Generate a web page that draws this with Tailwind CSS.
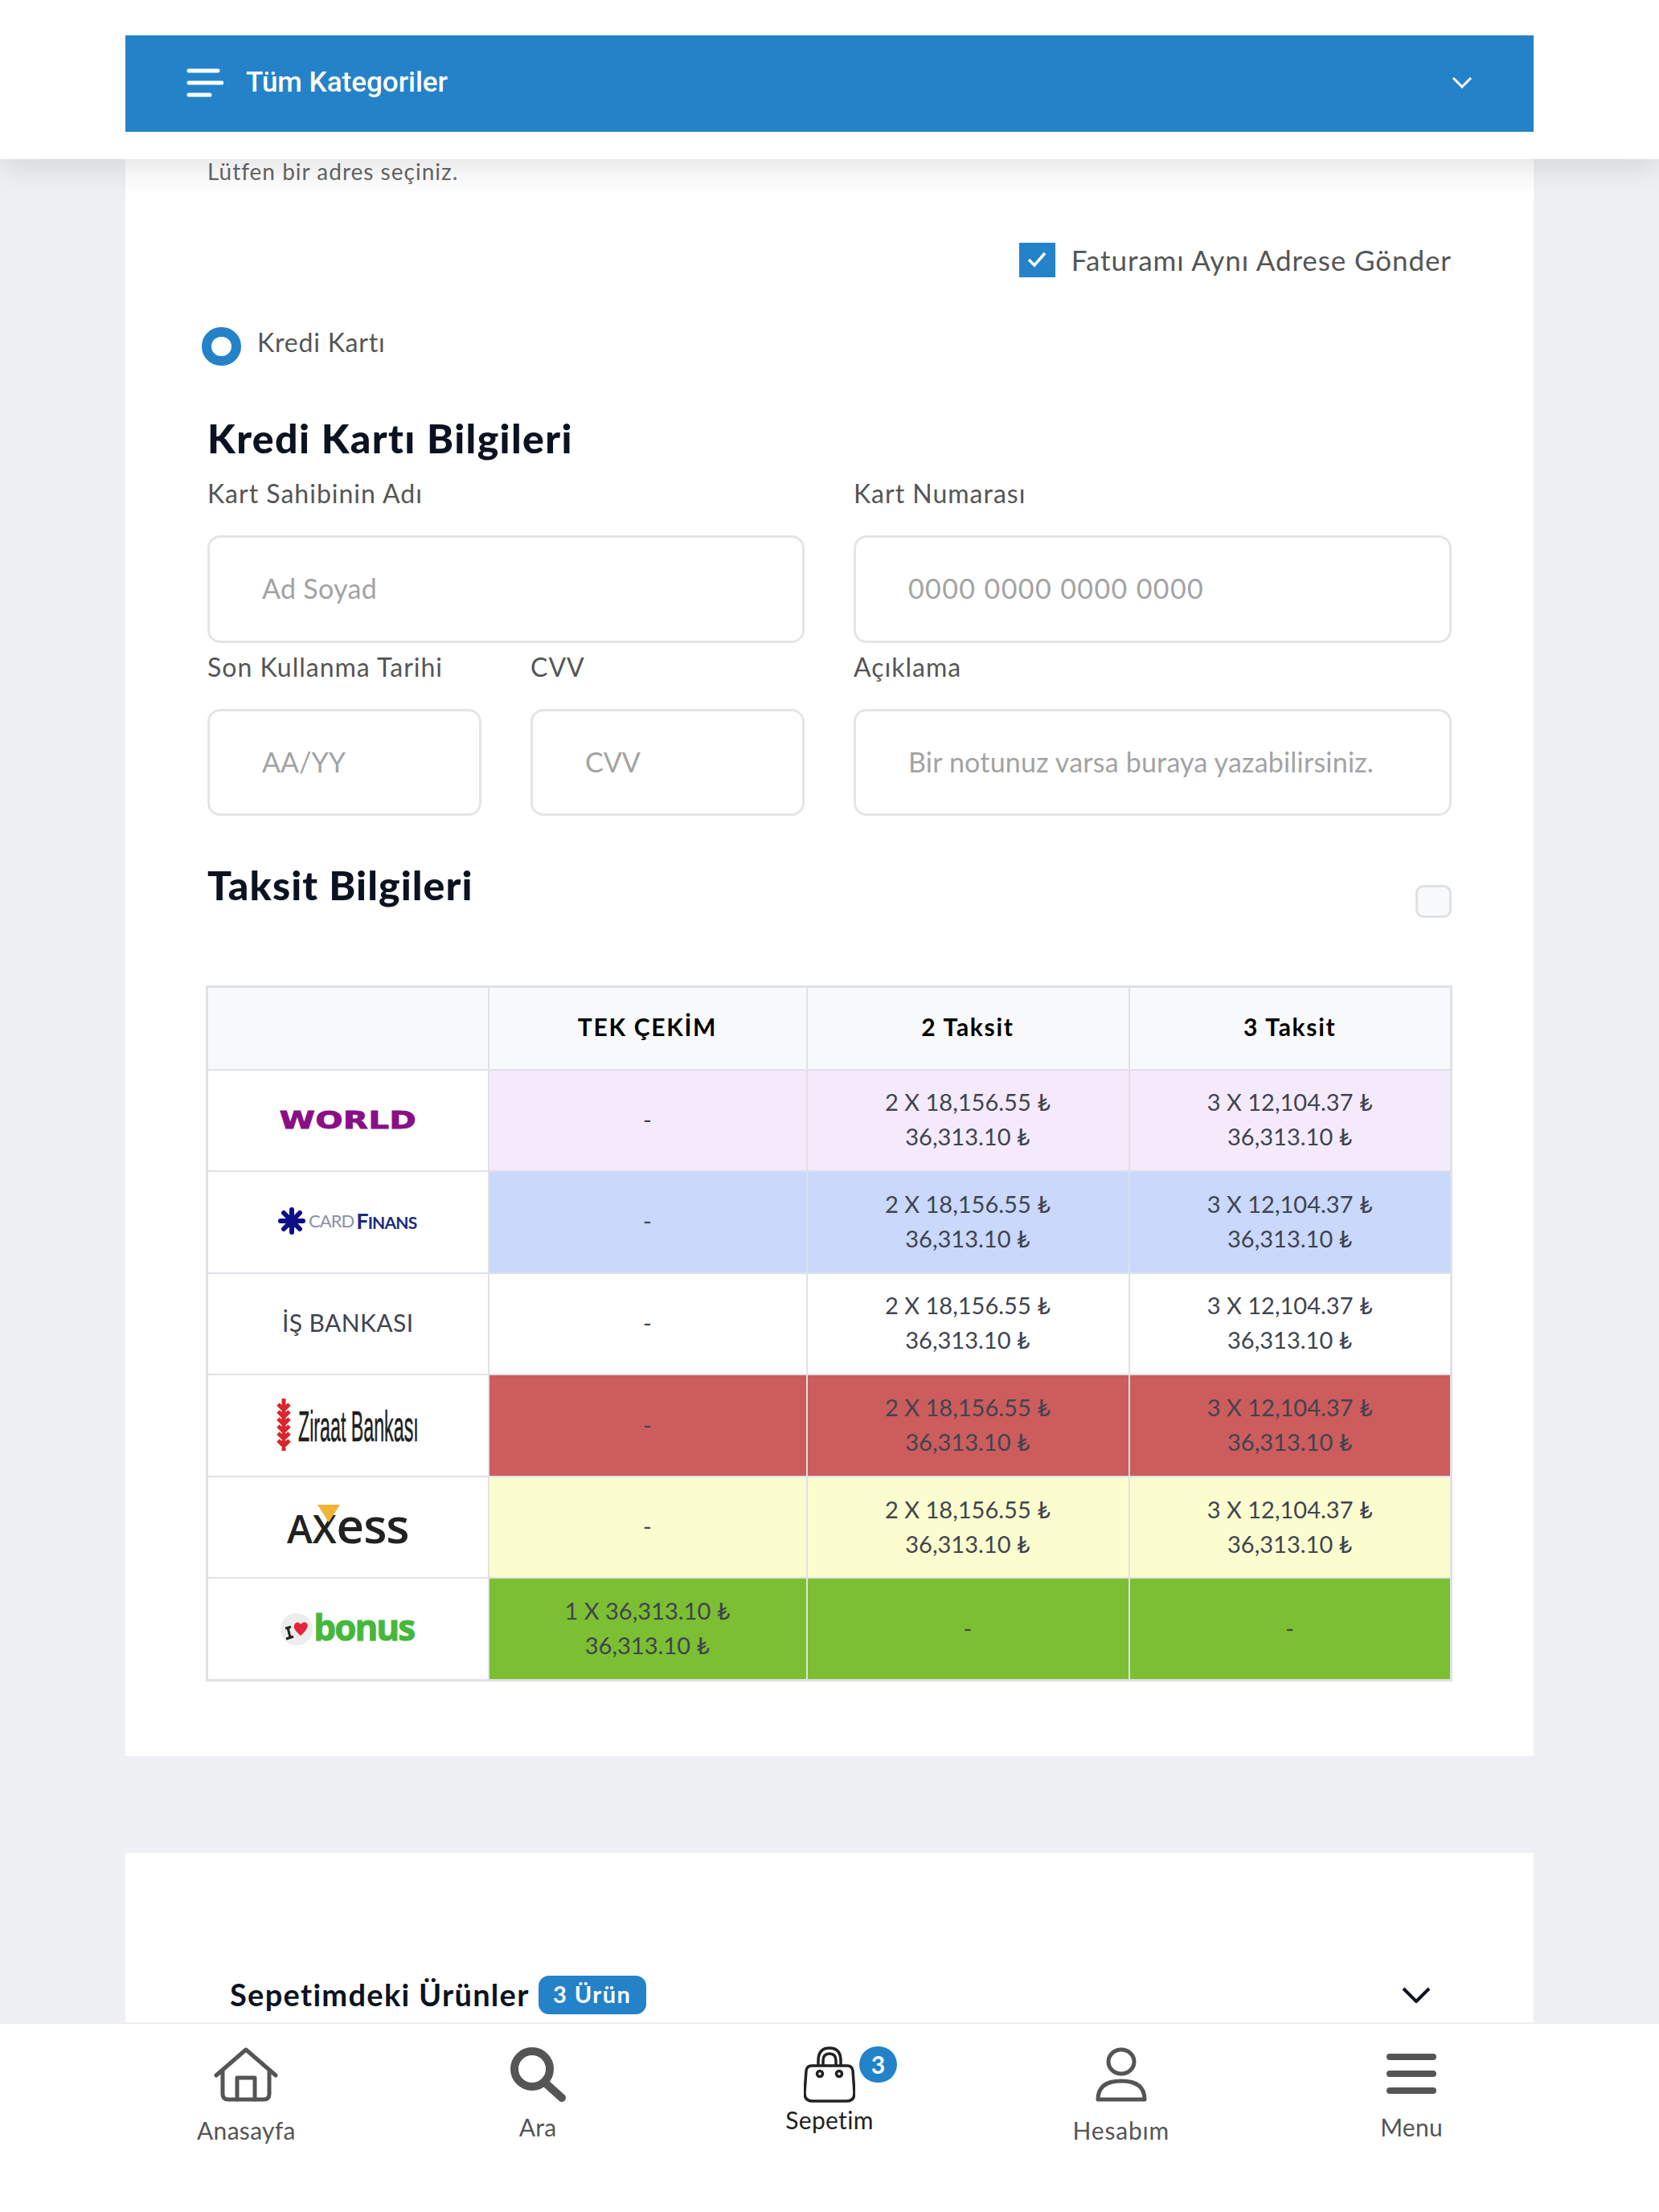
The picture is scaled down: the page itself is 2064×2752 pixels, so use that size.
<!DOCTYPE html>
<html lang="tr">
<head>
  <meta charset="UTF-8" />
  <title>Ödeme</title>
  <script src="https://cdn.jsdelivr.net/npm/@tailwindcss/browser@4"></script>
</head>
<body class="w-[2064px] h-[2752px] overflow-hidden relative bg-[#eff0f4] font-[family-name:Lato,sans-serif] text-[#555]">

  <!-- Top bar -->
  <header class="relative z-10 h-[198px] bg-white pt-[44px] px-[156px] shadow-[0_8px_40px_rgba(0,0,0,0.13)]">
    <div class="h-[120px] bg-[#2482c8] flex items-center pl-[76px] pr-[76px] pb-[3px] text-white">
      <svg class="w-[46px] h-[38px] mr-[28px]" viewBox="0 0 46 38" fill="none" stroke="white" stroke-width="5" stroke-linecap="round">
        <path d="M3 4H39M3 19H44M3 34H29" />
      </svg>
      <span class="font-[family-name:Roboto,sans-serif] font-medium text-[35px] leading-none">Tüm Kategoriler</span>
      <svg class="ml-auto w-[26px] h-[15px]" viewBox="0 0 26 15" fill="none" stroke="white" stroke-width="3">
        <path d="M2 2L13 13L24 2" />
      </svg>
    </div>
  </header>

  <main class="px-[156px]">
    <!-- Payment card -->
    <section class="bg-white h-[1988px] px-[102px]">
      <p class="-mt-[1px] text-[28px] leading-[32px] tracking-[1px] text-[#666]">Lütfen bir adres seçiniz.</p>

      <div class="flex justify-end items-center mt-[72px] gap-[20px]">
        <span class="w-[45px] h-[43px] bg-[#2482c8] flex items-center justify-center">
          <svg class="w-[26px] h-[22px]" viewBox="0 0 26 22" fill="none" stroke="white" stroke-width="3.5"><path d="M3 11L10 18L23 3" /></svg>
        </span>
        <span class="text-[35px] leading-[44px] tracking-[0.9px]">Faturamı Aynı Adrese Gönder</span>
      </div>

      <div class="flex items-center mt-[62px] -ml-[7px] gap-[20px]">
        <span class="w-[49px] h-[48px] rounded-full border-[12px] border-[#2482c8] bg-white"></span>
        <span class="text-[32px] leading-[40px] tracking-[0.8px] -mt-[10px]">Kredi Kartı</span>
      </div>

      <h2 class="mt-[62px] text-[50px] leading-[56px] tracking-[1.4px] font-black text-[#0b1320]">Kredi Kartı Bilgileri</h2>

      <div class="grid grid-cols-[743px_744px] gap-x-[61px] mt-[21px]">
        <div>
          <label class="block text-[32px] leading-[40px] tracking-[1px]">Kart Sahibinin Adı</label>
          <input placeholder="Ad Soyad" class="mt-[32px] w-full h-[134px] pl-[65px] pr-[20px] pb-[3px] rounded-[16px] border-[3px] border-[#e3e5e8] text-[34px] tracking-[0.3px] placeholder:text-[#a3a3a3]">
        </div>
        <div>
          <label class="block text-[32px] leading-[40px] tracking-[1px]">Kart Numarası</label>
          <input placeholder="0000 0000 0000 0000" class="mt-[32px] w-full h-[134px] pl-[65px] pr-[20px] pb-[3px] rounded-[16px] border-[3px] border-[#e3e5e8] text-[34px] tracking-[1.4px] placeholder:text-[#a3a3a3]">
        </div>
      </div>

      <div class="grid grid-cols-[341px_341px_744px] gap-x-[61px] mt-[10px]">
        <div>
          <label class="block text-[32px] leading-[40px] tracking-[1px]">Son Kullanma Tarihi</label>
          <input placeholder="AA/YY" class="mt-[32px] w-full h-[133px] pl-[65px] pr-[20px] pb-[3px] rounded-[16px] border-[3px] border-[#e3e5e8] text-[34px] placeholder:text-[#a3a3a3]">
        </div>
        <div>
          <label class="block text-[32px] leading-[40px] tracking-[1px]">CVV</label>
          <input placeholder="CVV" class="mt-[32px] w-full h-[133px] pl-[65px] pr-[20px] pb-[3px] rounded-[16px] border-[3px] border-[#e3e5e8] text-[34px] placeholder:text-[#a3a3a3]">
        </div>
        <div>
          <label class="block text-[32px] leading-[40px] tracking-[1px]">Açıklama</label>
          <input placeholder="Bir notunuz varsa buraya yazabilirsiniz." class="mt-[32px] w-full h-[133px] pl-[65px] pr-[20px] pb-[3px] rounded-[16px] border-[3px] border-[#e3e5e8] text-[34px] tracking-[0.2px] placeholder:text-[#a3a3a3]">
        </div>
      </div>

      <div class="flex justify-between items-start mt-[59px]">
        <h2 class="-mt-[1px] text-[50px] leading-[56px] tracking-[1.1px] font-black text-[#0b1320]">Taksit Bilgileri</h2>
        <span class="mt-[27px] w-[45px] h-[41px] rounded-[10px] border-[3px] border-[#dfe1e4] bg-[#f8f9fa]"></span>
      </div>

      <!-- Installments table -->
      <table class="mt-[84px] -ml-[2px] w-[1549px] table-fixed border-collapse border-[3px] border-[#dee2e6] text-[29px] leading-[43px] text-center text-[#3f4450] [&_td]:pb-[3px] [&_th]:pb-[3px]">
        <colgroup>
          <col class="w-[350px]"><col class="w-[396px]"><col class="w-[401px]"><col class="w-[401px]">
        </colgroup>
        <thead>
          <tr class="h-[103px] bg-[#f8f9fa] text-black font-black text-[30px] tracking-[1.7px]">
            <th class="border-2 border-[#dee2e6]"></th>
            <th class="border-2 border-[#dee2e6]">TEK ÇEKİM</th>
            <th class="border-2 border-[#dee2e6]">2 Taksit</th>
            <th class="border-2 border-[#dee2e6]">3 Taksit</th>
          </tr>
        </thead>
        <tbody>
          <tr class="h-[126.6px]">
            <td class="border-2 border-[#dee2e6] bg-white">
              <span class="inline-block font-[family-name:DejaVu_Sans,sans-serif] font-bold text-[30px] leading-none text-[#8a0f86] scale-x-[1.33] tracking-[0.5px] [-webkit-text-stroke:1px_#8a0f86]">WORLD</span>
            </td>
            <td class="border-2 border-[#dee2e6] bg-[#f5eafb]">-</td>
            <td class="border-2 border-[#dee2e6] bg-[#f5eafb]">2 X 18,156.55 ₺<br>36,313.10 ₺</td>
            <td class="border-2 border-[#dee2e6] bg-[#f5eafb]">3 X 12,104.37 ₺<br>36,313.10 ₺</td>
          </tr>
          <tr class="h-[126.6px]">
            <td class="border-2 border-[#dee2e6] bg-white">
              <span class="flex items-center justify-center gap-[3px] -ml-[2px]">
                <svg class="w-[36px] h-[34px]" viewBox="0 0 36 34" fill="none" stroke="#0c0f86" stroke-width="6" stroke-linecap="round">
                  <path d="M18 3V31M4 17H32M8 7L28 27M28 7L8 27" />
                </svg>
                <span class="text-[22px] leading-none tracking-[-1px] text-[#8a8fa8]">CARD</span><span class="text-[21px] leading-none font-bold tracking-[-0.8px] text-[#1d2a80]"><span class="text-[27px]">F</span>INANS</span>
              </span>
            </td>
            <td class="border-2 border-[#dee2e6] bg-[#c9d8fb]">-</td>
            <td class="border-2 border-[#dee2e6] bg-[#c9d8fb]">2 X 18,156.55 ₺<br>36,313.10 ₺</td>
            <td class="border-2 border-[#dee2e6] bg-[#c9d8fb]">3 X 12,104.37 ₺<br>36,313.10 ₺</td>
          </tr>
          <tr class="h-[126.6px]">
            <td class="border-2 border-[#dee2e6] bg-white text-[30px] tracking-[0.4px]">İŞ BANKASI</td>
            <td class="border-2 border-[#dee2e6] bg-white">-</td>
            <td class="border-2 border-[#dee2e6] bg-white">2 X 18,156.55 ₺<br>36,313.10 ₺</td>
            <td class="border-2 border-[#dee2e6] bg-white">3 X 12,104.37 ₺<br>36,313.10 ₺</td>
          </tr>
          <tr class="h-[126.6px]">
            <td class="border-2 border-[#dee2e6] bg-white">
              <span class="flex items-center justify-center gap-[9px]">
                <svg class="w-[18px] h-[67px]" viewBox="0 0 18 67" fill="none" stroke="#d8262c" stroke-width="5">
                  <path d="M9 1V66M2 8L9 15L16 8M2 17L9 24L16 17M2 26L9 33L16 26M2 35L9 42L16 35M2 44L9 51L16 44M2 53L9 60L16 53" />
                </svg>
                <span class="block w-[150px] overflow-visible mt-[3px]">
                  <span class="block origin-left scale-x-[0.43] text-[54px] leading-none text-left text-[#1f1f1f] font-[family-name:Liberation_Sans,sans-serif] whitespace-nowrap [-webkit-text-stroke:0.6px_#1f1f1f]">Ziraat Bankası</span>
                </span>
              </span>
            </td>
            <td class="border-2 border-[#dee2e6] bg-[#cd5c5c]">-</td>
            <td class="border-2 border-[#dee2e6] bg-[#cd5c5c]">2 X 18,156.55 ₺<br>36,313.10 ₺</td>
            <td class="border-2 border-[#dee2e6] bg-[#cd5c5c]">3 X 12,104.37 ₺<br>36,313.10 ₺</td>
          </tr>
          <tr class="h-[126.6px]">
            <td class="border-2 border-[#dee2e6] bg-white">
              <span class="relative inline-block">
                <svg class="absolute left-[38px] top-[5px] w-[28px] h-[22px]" viewBox="0 0 28 22"><path d="M0 0H28L14 22Z" fill="#f0b437" /></svg>
                <span class="block font-[family-name:Open_Sans,sans-serif] font-semibold text-[48px] leading-none text-[#222] whitespace-nowrap">AX<span class="text-[60px] tracking-[-1px]">ess</span></span>
              </span>
            </td>
            <td class="border-2 border-[#dee2e6] bg-[#fbfdcf]">-</td>
            <td class="border-2 border-[#dee2e6] bg-[#fbfdcf]">2 X 18,156.55 ₺<br>36,313.10 ₺</td>
            <td class="border-2 border-[#dee2e6] bg-[#fbfdcf]">3 X 12,104.37 ₺<br>36,313.10 ₺</td>
          </tr>
          <tr class="h-[126.6px]">
            <td class="border-2 border-[#dee2e6] bg-white">
              <span class="flex items-center justify-center -ml-[2px] -mt-[3px]">
                <svg class="w-[42px] h-[42px] mt-[6px]" viewBox="0 0 42 42">
                  <circle cx="21" cy="21" r="20" fill="#eceded" />
                  <path d="M14 18L7 20M10 19L13 31M8 33L17 30" stroke="#222" stroke-width="3" fill="none" />
                  <path d="M26 29C18 22 16 18 19 14C22 11 25 13 26 15C28 12 32 11 34 14C36 18 33 23 26 29Z" fill="#e5233b" />
                </svg>
                <span class="font-[family-name:Open_Sans,sans-serif] font-bold text-[44px] leading-none text-[#45b83b] tracking-[-2px] [-webkit-text-stroke:1px_#45b83b]">bonus</span>
              </span>
            </td>
            <td class="border-2 border-[#dee2e6] bg-[#7cbf33]">1 X 36,313.10 ₺<br>36,313.10 ₺</td>
            <td class="border-2 border-[#dee2e6] bg-[#7cbf33]">-</td>
            <td class="border-2 border-[#dee2e6] bg-[#7cbf33]">-</td>
          </tr>
        </tbody>
      </table>
    </section>

    <!-- Cart card -->
    <section class="mt-[120px] bg-white h-[400px] pl-[130px] pr-[128px] pt-[153px]">
      <div class="flex items-center">
        <h3 class="-mt-[3px] text-[38px] leading-[48px] tracking-[1.3px] font-bold text-[#0b1320]">Sepetimdeki Ürünler</h3>
        <span class="ml-[11px] w-[134px] h-[48px] rounded-[13px] bg-[#2482c8] text-white text-[29px] leading-[46px] tracking-[1.5px] font-bold text-center">3 Ürün</span>
        <svg class="ml-auto w-[36px] h-[20px]" viewBox="0 0 36 20" fill="none" stroke="#0b1320" stroke-width="4"><path d="M2 2L18 18L34 2" /></svg>
      </div>
    </section>
  </main>

  <!-- Bottom nav -->
  <nav class="absolute left-0 right-0 bottom-0 h-[236px] bg-white border-t-[2px] border-[#eeeeee] px-[125px] grid grid-cols-5 text-[30px] tracking-[0.3px] text-[#555]">
    <a class="flex flex-col items-center pt-[29px]">
      <svg class="w-[80px] h-[68px]" viewBox="0 0 80 68" fill="none" stroke="#555" stroke-width="5" stroke-linejoin="round" stroke-linecap="round">
        <path d="M3 35L40 3L77 35" />
        <path d="M11 30V58Q11 65 18 65H62Q69 65 69 58V30" />
        <path d="M29 65V38H51V65" />
      </svg>
      <span class="mt-[15px] leading-[40px]">Anasayfa</span>
    </a>
    <a class="flex flex-col items-center pt-[29px]">
      <svg class="w-[70px] h-[68px]" viewBox="0 0 70 68" fill="none" stroke="#555" stroke-width="10" stroke-linecap="round">
        <circle cx="28" cy="27" r="22" />
        <path d="M45 45L65 63" />
      </svg>
      <span class="mt-[11px] leading-[40px]">Ara</span>
    </a>
    <a class="flex flex-col items-center pt-[28px] text-[#222]">
      <span class="relative">
        <svg class="w-[64px] h-[70px] block" viewBox="0 0 64 70" fill="none" stroke="#222" stroke-width="3.5">
          <path d="M10 24H54Q60 24 61 30L63 58Q63 68 53 68H11Q1 68 1 58L3 30Q4 24 10 24Z" />
          <path d="M18 24V18Q18 2 32 2Q46 2 46 18V24" />
          <path d="M24 24V18Q24 9 32 9Q40 9 40 18V24" />
          <circle cx="20" cy="34" r="3.5" />
          <circle cx="44" cy="34" r="3.5" />
        </svg>
        <span class="absolute left-[69px] top-0 w-[47px] h-[45px] rounded-full bg-[#2482c8] text-white text-[30px] leading-[45px] font-bold text-center">3</span>
      </span>
      <span class="mt-[1px] leading-[40px]">Sepetim</span>
    </a>
    <a class="flex flex-col items-center pt-[29px]">
      <svg class="w-[64px] h-[68px]" viewBox="0 0 64 68" fill="none" stroke="#555" stroke-width="5" stroke-linejoin="round">
        <ellipse cx="32" cy="18" rx="16" ry="15" />
        <path d="M3 65Q3 42 32 42Q61 42 61 65Z" />
      </svg>
      <span class="mt-[15px] leading-[40px] tracking-[0.8px]">Hesabım</span>
    </a>
    <a class="flex flex-col items-center pt-[29px] -ml-[3px]">
      <svg class="w-[62px] h-[68px]" viewBox="0 0 62 68" fill="none" stroke="#555" stroke-width="8" stroke-linecap="round">
        <path d="M4 12H58M4 33H58M4 54H58" />
      </svg>
      <span class="mt-[11px] leading-[40px]">Menu</span>
    </a>
  </nav>

</body>
</html>
